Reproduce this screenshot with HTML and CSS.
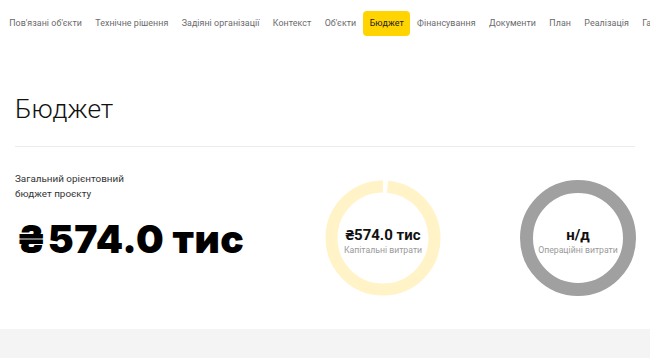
FILE: index.html
```html
<!DOCTYPE html>
<html lang="uk">
<head>
<meta charset="utf-8">
<link rel="stylesheet" href="styles.css">
</head>
<body>
<nav class="tabs">
  <a class="tab">Пов'язані об'єкти</a>
  <a class="tab">Технічне рішення</a>
  <a class="tab">Задіяні організації</a>
  <a class="tab">Контекст</a>
  <a class="tab">Об'єкти</a>
  <a class="tab active">Бюджет</a>
  <a class="tab">Фінансування</a>
  <a class="tab">Документи</a>
  <a class="tab">План</a>
  <a class="tab">Реалізація</a>
  <a class="tab">Галерея</a>
</nav>
<main class="content">
  <h1 class="title">Бюджет</h1>
  <hr class="divider">
  <section class="budget">
    <div class="total">
      <p class="label">Загальний орієнтовний<br>бюджет проєкту</p>
      <div class="amount">₴574.0 тис</div>
    </div>
    <div class="chart">
      <svg class="ring" width="116" height="116" viewBox="0 0 116 116">
        <circle cx="58" cy="58" r="51.5" fill="none" stroke="#fff3c7" stroke-width="12" stroke-dasharray="319 4.6" stroke-dashoffset="319" transform="rotate(-90 58 58)"/>
      </svg>
      <div class="chart-text">
        <div class="chart-value">₴574.0 тис</div>
        <div class="chart-label">Капітальні витрати</div>
      </div>
    </div>
    <div class="chart">
      <svg class="ring" width="116" height="116" viewBox="0 0 116 116">
        <circle cx="58" cy="58" r="51.5" fill="none" stroke="#a0a0a0" stroke-width="13"/>
      </svg>
      <div class="chart-text">
        <div class="chart-value">н/д</div>
        <div class="chart-label">Операційні витрати</div>
      </div>
    </div>
  </section>
</main>
<footer class="band"></footer>
</body>
</html>
```
FILE: styles.css
```css
* { box-sizing: border-box; }
html, body { margin: 0; padding: 0; }
body {
  font-family: Roboto, "Noto Sans", sans-serif;
  background: #fff;
  color: #111;
  width: 650px;
  height: 358px;
  overflow: hidden;
}
.tabs {
  display: flex;
  white-space: nowrap;
  padding: 11px 0 0 2.5px;
  height: 47px;
  overflow: hidden;
}
.tab {
  display: block;
  flex: none;
  padding: 0 6.7px;
  height: 25px;
  line-height: 25px;
  font-size: 8.9px;
  letter-spacing: 0.05px;
  color: #6a6a6a;
  border-radius: 4px;
}
.tab.active {
  background: #ffd400;
  color: #1a1a1a;
}
.content {
  padding: 0 15px;
}
.title {
  margin: 0;
  padding-top: 44px;
  font-size: 26.2px;
  line-height: 36px;
  font-weight: 300;
  color: #111;
}
.divider {
  margin: 19px 0 0;
  border: 0;
  border-top: 1px solid #ececec;
}
.budget {
  display: flex;
  align-items: flex-start;
}
.total {
  width: 310px;
  flex: none;
}
.label {
  margin: 24px 0 0;
  font-size: 9.9px;
  line-height: 15px;
  color: #333;
}
.amount {
  margin-top: 10px;
  font-family: Inter, Roboto, sans-serif;
  font-size: 39px;
  line-height: 56px;
  font-weight: 900;
  letter-spacing: 0.5px;
  color: #000;
}
.chart {
  position: relative;
  width: 116px;
  height: 116px;
  flex: none;
  margin-top: 33px;
}
.chart + .chart { margin-left: 79px; }
.ring { display: block; }
.chart-text {
  position: absolute;
  inset: 0;
  display: flex;
  flex-direction: column;
  align-items: center;
  justify-content: center;
  padding-top: 7px;
}
.chart-value {
  font-size: 15px;
  line-height: 17px;
  font-weight: 700;
  color: #111;
}
.chart-label {
  font-size: 8.7px;
  line-height: 12px;
  color: #9a9a9a;
}
.band {
  position: absolute;
  left: 0;
  top: 329px;
  width: 650px;
  height: 29px;
  background: #f4f4f4;
}
```
